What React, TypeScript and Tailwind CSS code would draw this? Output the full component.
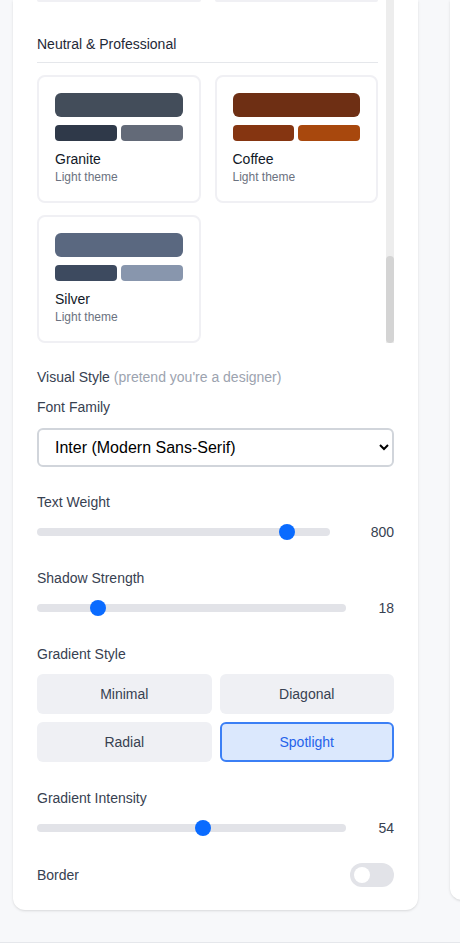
import { useState } from 'react';

type Theme = { name: string; main: string; left: string; right: string };

const themes: Theme[] = [
  { name: 'Granite', main: 'bg-[#434d5a]', left: 'bg-[#2f3949]', right: 'bg-[#636a78]' },
  { name: 'Coffee', main: 'bg-[#6e2f14]', left: 'bg-[#853511]', right: 'bg-[#a8480d]' },
  { name: 'Silver', main: 'bg-[#5a6880]', left: 'bg-[#3d4a5f]', right: 'bg-[#8896ad]' },
];

function ThemeCard({ theme }: { theme: Theme }) {
  return (
    <div className="border-2 border-[#f0f0f4] rounded-lg p-4 bg-white">
      <div className={`h-6 rounded-md ${theme.main}`} />
      <div className="flex gap-1 mt-2">
        <div className={`h-4 flex-1 rounded ${theme.left}`} />
        <div className={`h-4 flex-1 rounded ${theme.right}`} />
      </div>
      <div className="mt-2 text-sm text-[#111827]">{theme.name}</div>
      <div className="text-xs text-[#6b7280]">Light theme</div>
    </div>
  );
}

function Slider({ label, value, min, max, valueWidth, className = '' }: { label: string; value: number; min: number; max: number; valueWidth: string; className?: string }) {
  const p = (value - min) / (max - min);
  return (
    <div className={className}>
      <div className="text-sm text-[#374151] mb-2">{label}</div>
      <div className="flex items-center h-6">
        <div className="relative flex-1 h-2 rounded-full bg-[#e2e3e8]">
          <div
            className="absolute top-1/2 -translate-y-1/2 w-4 h-4 rounded-full bg-[#0a6bff]"
            style={{ left: `calc(${p * 100}% - ${p * 16}px)` }}
          />
        </div>
        <span className={`${valueWidth} text-right text-sm text-[#374151]`}>{value}</span>
      </div>
    </div>
  );
}

export default function App() {
  const [gradient, setGradient] = useState('Spotlight');
  const [border, setBorder] = useState(false);

  return (
    <div className="min-h-screen bg-[#f7f8fa] overflow-hidden font-['Liberation_Sans',Arial,sans-serif]">
      <div className="flex items-start gap-8 pl-[13px]">
        <div className="w-[405px] shrink-0 bg-white rounded-b-xl shadow-sm px-6 pb-[23px]">
          {/* theme list, scrolled to the bottom */}
          <div className="flex h-[343px]">
            <div className="flex-1 pr-2">
              <div className="grid grid-cols-2 gap-x-3.5">
                <div className="h-[2px] bg-[#f0f0f4] rounded-b" />
                <div className="h-[2px] bg-[#f0f0f4] rounded-b" />
              </div>
              <div className="mt-8 pb-2 border-b border-[#e5e7eb] text-sm text-[#1f2937]">Neutral &amp; Professional</div>
              <div className="grid grid-cols-2 gap-x-3.5 gap-y-3 mt-3">
                {themes.map((t) => (
                  <ThemeCard key={t.name} theme={t} />
                ))}
              </div>
            </div>
            <div className="w-2 bg-[#ededed] flex flex-col justify-end">
              <div className="h-[87px] rounded-full bg-[#d4d4d4]" />
            </div>
          </div>

          <div className="mt-6 text-sm text-[#374151]">
            Visual Style <span className="text-[#9ca3af]">(pretend you're a designer)</span>
          </div>

          <div className="mt-2.5 text-sm text-[#374151]">Font Family</div>
          <select
            defaultValue="inter"
            className="mt-[11px] w-full border-2 border-[#d1d5db] rounded-md px-3 py-2 text-base text-black bg-white"
          >
            <option value="inter">Inter (Modern Sans-Serif)</option>
            <option value="serif">Georgia (Classic Serif)</option>
            <option value="mono">Mono (Developer)</option>
          </select>

          <Slider label="Text Weight" value={800} min={100} max={900} valueWidth="w-16" className="mt-[25px]" />
          <Slider label="Shadow Strength" value={18} min={0} max={100} valueWidth="w-12" className="mt-6" />

          <div className="mt-6">
            <div className="text-sm text-[#374151] mb-2.5">Gradient Style</div>
            <div className="grid grid-cols-2 gap-2">
              {['Minimal', 'Diagonal', 'Radial', 'Spotlight'].map((g) => (
                <button
                  key={g}
                  onClick={() => setGradient(g)}
                  className={
                    g === gradient
                      ? 'h-10 rounded-md border-2 border-[#3b7ff5] bg-[#dbe8fd] text-sm text-[#2563eb]'
                      : 'h-10 rounded-md border-2 border-transparent bg-[#eff0f4] text-sm text-[#374151]'
                  }
                >
                  {g}
                </button>
              ))}
            </div>
          </div>

          <Slider label="Gradient Intensity" value={54} min={0} max={100} valueWidth="w-12" className="mt-[26px]" />

          <div className="mt-[23px] flex items-center justify-between">
            <span className="text-sm text-[#374151]">Border</span>
            <button
              onClick={() => setBorder(!border)}
              className={`w-11 h-6 rounded-full flex items-center px-1 ${border ? 'bg-[#0a6bff] justify-end' : 'bg-[#e2e3e8] justify-start'}`}
            >
              <span className="w-4 h-4 rounded-full bg-white" />
            </button>
          </div>
        </div>

        <div className="w-[300px] h-[900px] shrink-0 bg-white rounded-b-xl shadow-sm" />
      </div>
      <div className="mt-8 h-4 border-t border-[#e5e7eb] bg-white" />
    </div>
  );
}
